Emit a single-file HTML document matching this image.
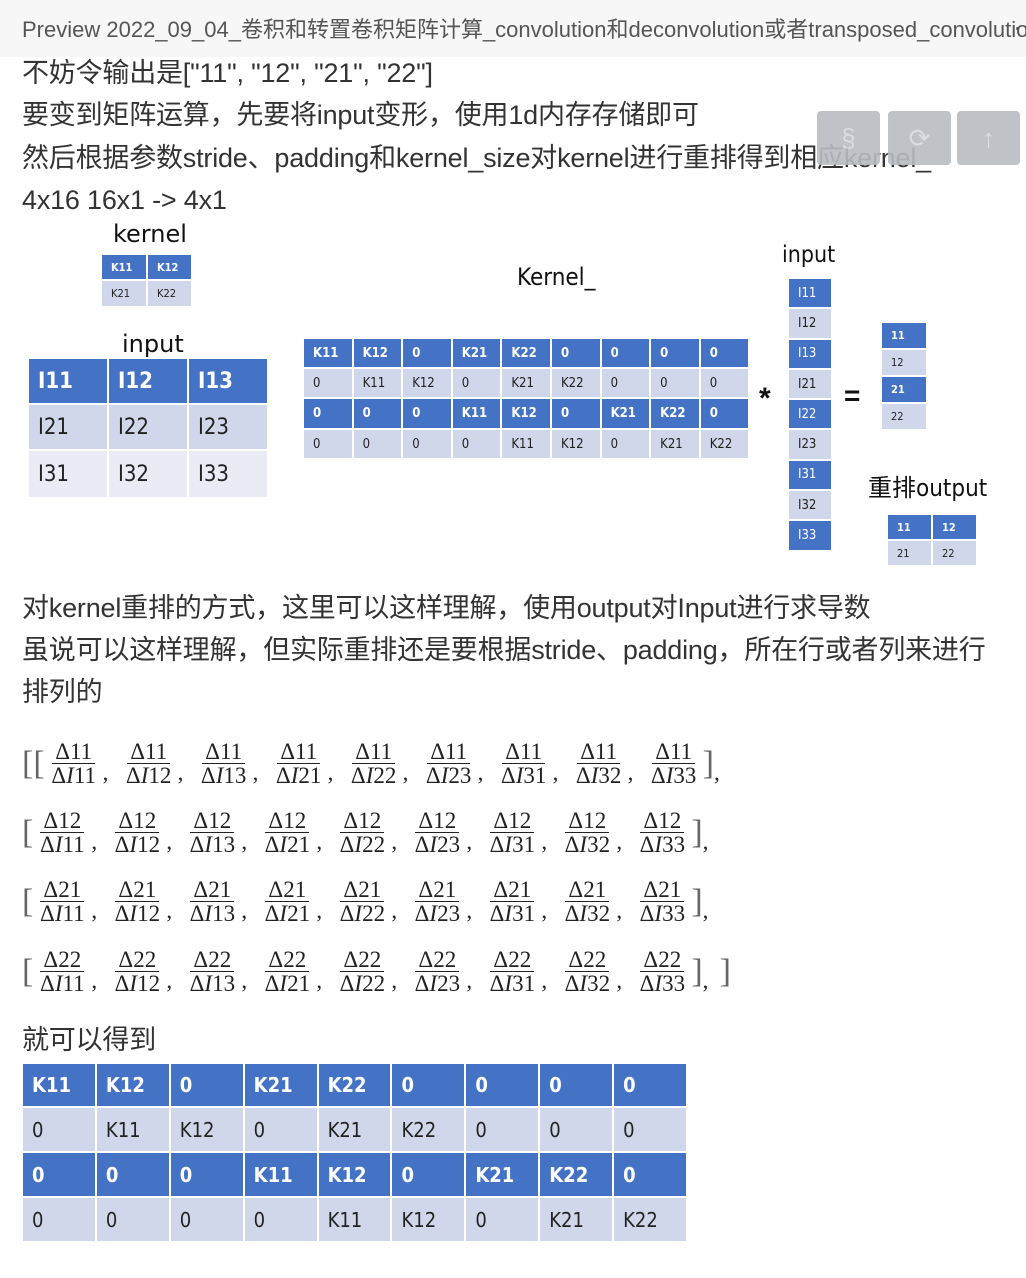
<!DOCTYPE html>
<html><head><meta charset="utf-8"><style>
*{margin:0;padding:0;box-sizing:border-box}
body{width:1026px;height:1278px;background:#fff;position:relative;overflow:hidden;font-family:"Liberation Sans","Noto Sans CJK SC",sans-serif;color:#333}
.a{position:absolute;white-space:nowrap}
.hdr{position:absolute;left:0;top:0;width:1026px;height:57px;background:#f7f7f7;color:#555;font-size:22px;line-height:60px;padding-left:22px;white-space:nowrap;overflow:hidden}
.t{font-size:27px;line-height:30px;letter-spacing:-0.2px}
.btn{position:absolute;top:111px;width:63px;height:54px;background:#b9bdc1;border-radius:4px;color:#d8dadc;font-size:26px;text-align:center;line-height:54px}
.g{position:absolute;display:grid;gap:2px;font-family:"DejaVu Sans Condensed","Liberation Sans",sans-serif}
.g div{display:flex;align-items:center;padding-left:9px}
.b{background:#4472c4;color:#fff;font-weight:bold}
.l{background:#d0d7eb;color:#222}
.m{background:#e9ebf5;color:#222}
.d{font-family:"Liberation Serif",serif;font-size:23px;color:#222}
.row{position:absolute;left:22px;display:flex;align-items:center}
.fr{display:inline-flex;flex-direction:column;align-items:center;width:58px;line-height:23px}
.fr span:first-child{border-bottom:1px solid #222;padding:0 3px}
.cm{width:17px;padding-top:18px}
.br{font-size:34px;color:#666;font-weight:100}
</style></head><body>
<div class="hdr">Preview 2022_09_04_卷积和转置卷积矩阵计算_convolution和deconvolution或者transposed_convolution</div>
<div class="a" style="left:1016px;top:27px;width:3px;height:3px;background:#555;border-radius:2px"></div>
<div class="a t" style="left:22px;top:58px">不妨令输出是["11", "12", "21", "22"]</div>
<div class="a t" style="left:22px;top:100px">要变到矩阵运算，先要将input变形，使用1d内存存储即可</div>
<div class="a t" style="left:22px;top:143px">然后根据参数stride、padding和kernel_size对kernel进行重排得到相应kernel_</div>
<div class="a t" style="left:22px;top:185px">4x16 16x1 -&gt; 4x1</div>
<div class="btn" style="left:817px;opacity:.9">§</div>
<div class="btn" style="left:888px;opacity:.9">⟳</div>
<div class="btn" style="left:957px;opacity:.9">↑</div>

<div class="a" style="left:113px;top:220px;font-size:24px;color:#111;font-family:'DejaVu Sans',sans-serif">kernel</div>
<div class="g" style="left:102px;top:255px;grid-template-columns:44px 43px;grid-template-rows:24px 25px;font-size:11px">
<div class="b">K11</div><div class="b">K12</div><div class="l">K21</div><div class="l">K22</div></div>

<div class="a" style="left:122px;top:330px;font-size:24px;color:#111;font-family:'DejaVu Sans',sans-serif">input</div>
<div class="g" style="left:29px;top:359px;grid-template-columns:78px 78px 78px;grid-template-rows:44px 44px 46px;font-size:22px">
<div class="b">I11</div><div class="b">I12</div><div class="b">I13</div>
<div class="l">I21</div><div class="l">I22</div><div class="l">I23</div>
<div class="m">I31</div><div class="m">I32</div><div class="m">I33</div></div>

<div class="a" style="left:517px;top:263px;font-size:24px;color:#111;font-family:'DejaVu Sans Condensed',sans-serif">Kernel_</div>
<div class="g" style="left:304px;top:339px;grid-template-columns:repeat(9,47.6px);grid-template-rows:28px 28px 29px 28px;font-size:13px">
<div class="b">K11</div><div class="b">K12</div><div class="b">0</div><div class="b">K21</div><div class="b">K22</div><div class="b">0</div><div class="b">0</div><div class="b">0</div><div class="b">0</div>
<div class="l">0</div><div class="l">K11</div><div class="l">K12</div><div class="l">0</div><div class="l">K21</div><div class="l">K22</div><div class="l">0</div><div class="l">0</div><div class="l">0</div>
<div class="b">0</div><div class="b">0</div><div class="b">0</div><div class="b">K11</div><div class="b">K12</div><div class="b">0</div><div class="b">K21</div><div class="b">K22</div><div class="b">0</div>
<div class="l">0</div><div class="l">0</div><div class="l">0</div><div class="l">0</div><div class="l">K11</div><div class="l">K12</div><div class="l">0</div><div class="l">K21</div><div class="l">K22</div></div>

<div class="a" style="left:782px;top:242px;font-size:23px;color:#111;font-family:'DejaVu Sans Condensed',sans-serif">input</div>
<div class="g" style="left:789px;top:279px;grid-template-columns:42px;grid-template-rows:repeat(9,28.3px);font-size:13px;font-weight:normal">
<div class="b" style="font-weight:normal">I11</div><div class="l">I12</div><div class="b" style="font-weight:normal">I13</div><div class="l">I21</div><div class="b" style="font-weight:normal">I22</div><div class="l">I23</div><div class="b" style="font-weight:normal">I31</div><div class="l">I32</div><div class="b" style="font-weight:normal">I33</div></div>
<div class="a" style="left:759px;top:382px;font-size:30px;font-weight:bold;color:#111">*</div>
<div class="a" style="left:844px;top:380px;font-size:28px;font-weight:bold;color:#111">=</div>
<div class="g" style="left:882px;top:323px;grid-template-columns:44px;grid-template-rows:repeat(4,24.5px);gap:2.5px;font-size:11px">
<div class="b">11</div><div class="l">12</div><div class="b">21</div><div class="l">22</div></div>
<div class="a" style="left:868px;top:468px;font-size:24px;color:#111;font-family:'DejaVu Sans Condensed','Noto Sans CJK SC',sans-serif">重排output</div>
<div class="g" style="left:888px;top:515px;grid-template-columns:43px 43px;grid-template-rows:24px 24px;font-size:11px">
<div class="b">11</div><div class="b">12</div><div class="l">21</div><div class="l">22</div></div>

<div class="a t" style="left:22px;top:593px">对kernel重排的方式，这里可以这样理解，使用output对Input进行求导数</div>
<div class="a t" style="left:22px;top:635px">虽说可以这样理解，但实际重排还是要根据stride、padding，所在行或者列来进行</div>
<div class="a t" style="left:22px;top:677px">排列的</div>

<div class="row d" style="top:740px"><span class="br">[[</span><span class="fr"><span>Δ11</span><span>Δ<i>I</i>11</span></span><span class="cm">,</span><span class="fr"><span>Δ11</span><span>Δ<i>I</i>12</span></span><span class="cm">,</span><span class="fr"><span>Δ11</span><span>Δ<i>I</i>13</span></span><span class="cm">,</span><span class="fr"><span>Δ11</span><span>Δ<i>I</i>21</span></span><span class="cm">,</span><span class="fr"><span>Δ11</span><span>Δ<i>I</i>22</span></span><span class="cm">,</span><span class="fr"><span>Δ11</span><span>Δ<i>I</i>23</span></span><span class="cm">,</span><span class="fr"><span>Δ11</span><span>Δ<i>I</i>31</span></span><span class="cm">,</span><span class="fr"><span>Δ11</span><span>Δ<i>I</i>32</span></span><span class="cm">,</span><span class="fr"><span>Δ11</span><span>Δ<i>I</i>33</span></span><span class="br">]</span><span class="cm">,</span></div>
<div class="row d" style="top:809px"><span class="br">[</span><span class="fr"><span>Δ12</span><span>Δ<i>I</i>11</span></span><span class="cm">,</span><span class="fr"><span>Δ12</span><span>Δ<i>I</i>12</span></span><span class="cm">,</span><span class="fr"><span>Δ12</span><span>Δ<i>I</i>13</span></span><span class="cm">,</span><span class="fr"><span>Δ12</span><span>Δ<i>I</i>21</span></span><span class="cm">,</span><span class="fr"><span>Δ12</span><span>Δ<i>I</i>22</span></span><span class="cm">,</span><span class="fr"><span>Δ12</span><span>Δ<i>I</i>23</span></span><span class="cm">,</span><span class="fr"><span>Δ12</span><span>Δ<i>I</i>31</span></span><span class="cm">,</span><span class="fr"><span>Δ12</span><span>Δ<i>I</i>32</span></span><span class="cm">,</span><span class="fr"><span>Δ12</span><span>Δ<i>I</i>33</span></span><span class="br">]</span><span class="cm">,</span></div>
<div class="row d" style="top:878px"><span class="br">[</span><span class="fr"><span>Δ21</span><span>Δ<i>I</i>11</span></span><span class="cm">,</span><span class="fr"><span>Δ21</span><span>Δ<i>I</i>12</span></span><span class="cm">,</span><span class="fr"><span>Δ21</span><span>Δ<i>I</i>13</span></span><span class="cm">,</span><span class="fr"><span>Δ21</span><span>Δ<i>I</i>21</span></span><span class="cm">,</span><span class="fr"><span>Δ21</span><span>Δ<i>I</i>22</span></span><span class="cm">,</span><span class="fr"><span>Δ21</span><span>Δ<i>I</i>23</span></span><span class="cm">,</span><span class="fr"><span>Δ21</span><span>Δ<i>I</i>31</span></span><span class="cm">,</span><span class="fr"><span>Δ21</span><span>Δ<i>I</i>32</span></span><span class="cm">,</span><span class="fr"><span>Δ21</span><span>Δ<i>I</i>33</span></span><span class="br">]</span><span class="cm">,</span></div>
<div class="row d" style="top:948px"><span class="br">[</span><span class="fr"><span>Δ22</span><span>Δ<i>I</i>11</span></span><span class="cm">,</span><span class="fr"><span>Δ22</span><span>Δ<i>I</i>12</span></span><span class="cm">,</span><span class="fr"><span>Δ22</span><span>Δ<i>I</i>13</span></span><span class="cm">,</span><span class="fr"><span>Δ22</span><span>Δ<i>I</i>21</span></span><span class="cm">,</span><span class="fr"><span>Δ22</span><span>Δ<i>I</i>22</span></span><span class="cm">,</span><span class="fr"><span>Δ22</span><span>Δ<i>I</i>23</span></span><span class="cm">,</span><span class="fr"><span>Δ22</span><span>Δ<i>I</i>31</span></span><span class="cm">,</span><span class="fr"><span>Δ22</span><span>Δ<i>I</i>32</span></span><span class="cm">,</span><span class="fr"><span>Δ22</span><span>Δ<i>I</i>33</span></span><span class="br">]</span><span class="cm">,</span><span class="br">]</span></div>

<div class="a t" style="left:22px;top:1025px">就可以得到</div>
<div class="g" style="left:23px;top:1064px;grid-template-columns:repeat(9,71.9px);grid-template-rows:42px 43px 43px 43px;font-size:20px">
<div class="b">K11</div><div class="b">K12</div><div class="b">0</div><div class="b">K21</div><div class="b">K22</div><div class="b">0</div><div class="b">0</div><div class="b">0</div><div class="b">0</div>
<div class="l">0</div><div class="l">K11</div><div class="l">K12</div><div class="l">0</div><div class="l">K21</div><div class="l">K22</div><div class="l">0</div><div class="l">0</div><div class="l">0</div>
<div class="b">0</div><div class="b">0</div><div class="b">0</div><div class="b">K11</div><div class="b">K12</div><div class="b">0</div><div class="b">K21</div><div class="b">K22</div><div class="b">0</div>
<div class="l">0</div><div class="l">0</div><div class="l">0</div><div class="l">0</div><div class="l">K11</div><div class="l">K12</div><div class="l">0</div><div class="l">K21</div><div class="l">K22</div></div>
</body></html>
